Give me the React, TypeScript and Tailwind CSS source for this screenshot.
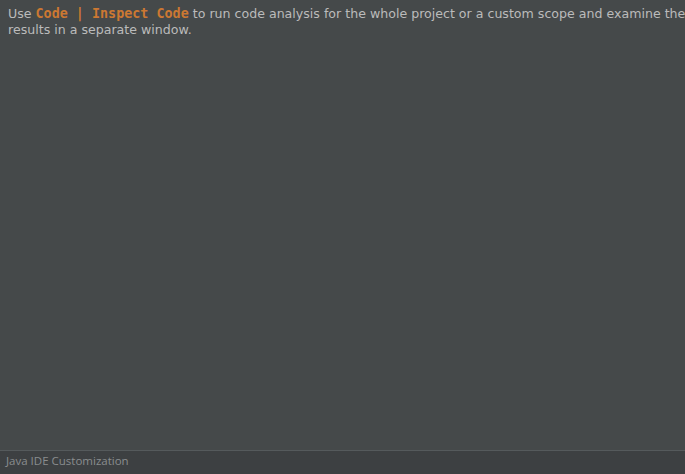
export default function App() {
  return (
    <div className="w-[685px] h-[474px] bg-[#45494a] flex flex-col overflow-hidden">
      <div className="flex-1 w-[700px] pl-[8px] pt-[6px] text-[12.6px] leading-[16px] text-[#bbbbbb] font-['DejaVu_Sans',Verdana,sans-serif]">
        Use{" "}
        <span className="font-bold text-[13.4px] text-[#cc7832] font-['DejaVu_Sans_Mono',monospace]">
          Code | Inspect Code
        </span>{" "}
        to run code analysis for the whole project or a custom scope and examine the results in a separate window.
      </div>
      <div className="h-[24px] shrink-0 border-t border-[#555a5c] bg-[#3d4042] pl-[6px] pt-[2px] flex items-start text-[11.5px] leading-[16px] text-[#8a8d8f] font-['Open_Sans',sans-serif]">
        Java IDE Customization
      </div>
    </div>
  );
}
